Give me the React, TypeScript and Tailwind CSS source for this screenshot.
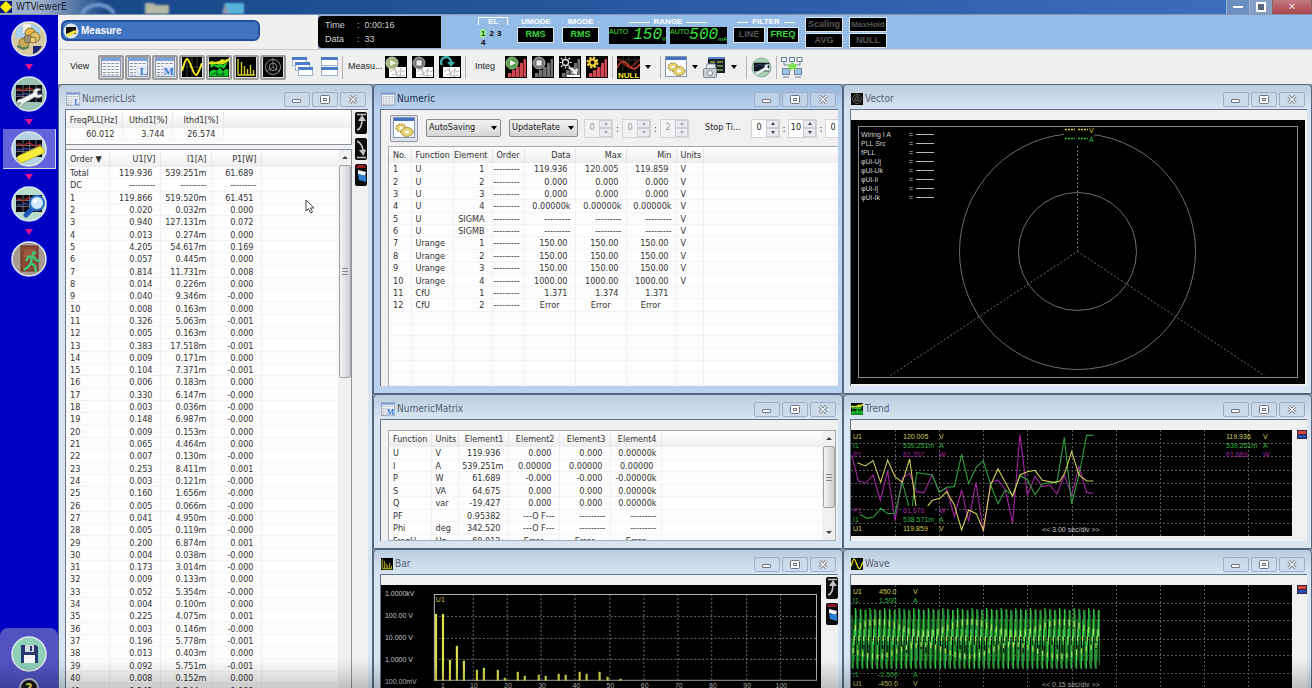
import { Fragment, type ReactNode } from "react";

type IconProps = { className?: string };

/* ---------- small window icons ---------- */

function ListIcon({ className = "size-5", letter }: IconProps & { letter?: string }) {
  return (
    <svg viewBox="0 0 20 20" className={className}>
      <rect x="0.5" y="0.5" width="19" height="19" fill="#f4f6fa" stroke="#8a96ac" />
      <rect x="1" y="1" width="18" height="3" fill="#7d9fd8" />
      <path
        d="M2 6.5h16M2 9.5h16M2 12.5h16M2 15.5h16M2 18h16"
        stroke="#8d939e"
        strokeWidth="1"
        strokeDasharray="3 1.2"
      />
      {letter && (
        <>
          <rect x="8" y="9" width="11" height="10" fill="#dfe8f8" />
          <text
            x="19"
            y="18"
            textAnchor="end"
            fontSize="11"
            fontWeight="bold"
            fontFamily="Liberation Serif, serif"
            fill="#3b77cf"
          >
            {letter}
          </text>
        </>
      )}
    </svg>
  );
}

function SineIcon({ className = "size-5" }: IconProps) {
  return (
    <svg viewBox="0 0 20 20" className={className}>
      <rect width="20" height="20" fill="#000" />
      <path d="M0 10h20M5 0v20M10 0v20M15 0v20" stroke="#4b4b3a" strokeWidth="0.8" />
      <path d="M0 14C2 8 3 2 5 2c3 0 6 16 9 16 2 0 4-7 6-12" fill="none" stroke="#f4ee22" strokeWidth="2" />
    </svg>
  );
}

function TrendIcon({ className = "size-5" }: IconProps) {
  return (
    <svg viewBox="0 0 20 20" className={className}>
      <rect width="20" height="20" fill="#000" />
      <path d="M0 5l3-1 3 1 4-1 3-2 3 1 4-2v3l-5 3-4 1-4-1-4 1-3-1z" fill="#d8e01c" />
      <path d="M1 8l4-1 3 1 3-1 3 1 5-3-2 4-2 3-3-2-3 1-4-2-3 2z" fill="#18c828" />
      <path d="M1 15l3-2 4 1 3-3 3 4 3-3 2 1v6H1z" fill="#18c828" stroke="#18c828" />
      <path d="M2 18l4-2 5 2 5-1M8 14v5M14 15v4" stroke="#053" fill="none" />
    </svg>
  );
}

function BarIcon({ className = "size-5" }: IconProps) {
  return (
    <svg viewBox="0 0 20 20" className={className}>
      <rect width="20" height="20" fill="#000" />
      <path d="M2 2v16h17M5.5 5v13M8.5 9v9M11.5 12v6M14.5 8v10M17.5 13v5" stroke="#d6cf2a" strokeWidth="1.4" fill="none" />
    </svg>
  );
}

function VectorIcon({ className = "size-5" }: IconProps) {
  return (
    <svg viewBox="0 0 20 20" className={className}>
      <rect width="20" height="20" fill="#0a0a0a" />
      <g fill="none" stroke="#8a8a8a">
        <circle cx="10" cy="10" r="7.5" />
        <circle cx="10" cy="10" r="3.8" />
        <path d="M10 1v9l-7 5M10 10l7 5" strokeWidth="0.8" />
      </g>
    </svg>
  );
}

function CascadeIcon() {
  return (
    <svg viewBox="0 0 21 20" className="h-5 w-[21px]">
      {[0, 1, 2].map((i) => (
        <g key={i} transform={`translate(${i * 3} ${i * 5})`}>
          <rect x="0.5" y="0.5" width="14" height="8" fill="#fff" stroke="#9fb2cf" />
          <rect width="15" height="3" fill="#4a7cc8" />
        </g>
      ))}
    </svg>
  );
}

function TileIcon() {
  return (
    <svg viewBox="0 0 17 20" className="h-5 w-[17px]">
      {[0, 10].map((y) => (
        <g key={y}>
          <rect x="0.5" y={y + 0.5} width="16" height="8" fill="#fff" stroke="#9fb2cf" />
          <rect y={y} width="17" height="3" fill="#4a7cc8" />
        </g>
      ))}
    </svg>
  );
}

/* ---------- toolbar icons ---------- */

function MeasureIcon({ kind }: { kind: "play" | "stop" | "reset" }) {
  return (
    <svg viewBox="0 0 22 22" className="size-[22px]">
      <rect width="22" height="22" fill="#000" />
      <rect x="4" y="11" width="17" height="10" fill="#fff" />
      <path
        d="M5 16l4-3 3 4 3-3 4 2 2-2M7 19l4-1 4 2 5-1M10 12l2 9M16 12l-1 9"
        fill="none"
        stroke="#b9aeb0"
        strokeWidth="0.9"
      />
      {kind === "play" && (
        <>
          <circle cx="7" cy="7" r="6" fill="#9fb57c" stroke="#d3d9bf" />
          <path d="M5 4l6 3-6 3z" fill="#eef5dd" />
        </>
      )}
      {kind === "stop" && (
        <>
          <circle cx="7" cy="7" r="6" fill="#777" stroke="#aaa" />
          <rect x="4.5" y="4.5" width="5" height="5" fill="#eee" />
        </>
      )}
      {kind === "reset" && (
        <>
          <path d="M3 9a5 5 0 1 1 9-2" fill="none" stroke="#3fb0b0" strokeWidth="2.4" />
          <path d="M8 6h8l-4 5z" fill="#3fb0b0" />
        </>
      )}
    </svg>
  );
}

function IntegIcon({ kind }: { kind: "play" | "stop" | "reset" | "set" }) {
  const red = kind === "play" || kind === "set";
  return (
    <svg viewBox="0 0 22 22" className="size-[22px]">
      <rect width="22" height="22" fill="#000" />
      <path
        d="M3 21v-4h3.500v4zM7 21v-7h3.500v7zM11 21V11h3.500v10zM15 21V7h3v14zM18.500 21V3H21v18z"
        fill={red ? "#cf4850" : "#727272"}
      />
      {kind === "play" && (
        <>
          <circle cx="7" cy="7" r="6" fill="#5c9a4e" stroke="#9fc48f" />
          <path d="M5 4l6 3-6 3z" fill="#e9f5dd" />
        </>
      )}
      {kind === "stop" && (
        <>
          <circle cx="7" cy="7" r="6" fill="#777" stroke="#aaa" />
          <rect x="4.5" y="4.5" width="5" height="5" fill="#eee" />
        </>
      )}
      {kind === "reset" && (
        <>
          <circle cx="6.5" cy="6.5" r="3" fill="none" stroke="#e8e8e8" strokeWidth="1.3" />
          <path
            d="M6.5 0.5v2M6.5 10.5v2M0.5 6.5h2M10.5 6.5h2M2 2l1.5 1.5M11 2L9.5 3.5M2 11l1.5-1.5M11 11L9.5 9.5"
            stroke="#e8e8e8"
            strokeWidth="1.2"
          />
          <path d="M8 12c4-1 7 0 8 2l3-2-1 7-6-2 2-1c-1-2-3-3-6-4z" fill="#eee" />
          <path d="M8 19h13v2H8z" fill="#fff" />
        </>
      )}
      {kind === "set" && (
        <>
          <circle cx="6.5" cy="6.5" r="4.5" fill="none" stroke="#f2cf3a" strokeWidth="3" strokeDasharray="2.2 1.3" />
          <circle cx="6.5" cy="6.5" r="3" fill="#111" stroke="#f2cf3a" strokeWidth="2" />
        </>
      )}
    </svg>
  );
}

function NullIcon() {
  return (
    <svg viewBox="0 0 23 23" className="size-[23px]">
      <rect width="23" height="23" fill="#000" />
      <path d="M0 4h23M6 0v15M12 0v15M18 0v15" stroke="#444" strokeWidth="0.7" />
      <path d="M0 12C4 4 7 4 11 9s8 5 12-1" fill="none" stroke="#e04a28" strokeWidth="1.5" />
      <path d="M0 3c5 0 7 8 12 8s7-6 11-7" fill="none" stroke="#9a2818" strokeWidth="1.2" />
      <text x="1" y="22" fontSize="8" fontWeight="bold" fontFamily="Liberation Sans, sans-serif" fill="#f3ea1e">
        NULL
      </text>
    </svg>
  );
}

function GearsIcon() {
  return (
    <svg viewBox="0 0 22 22" className="size-[22px]">
      <rect x="0.5" y="0.5" width="21" height="20" fill="#fbfcff" stroke="#8795b2" />
      <rect x="1" y="1" width="20" height="3" fill="#4470c6" />
      <g fill="#e6d272" stroke="#8d7a28">
        <ellipse cx="8" cy="11" rx="5" ry="4" strokeDasharray="2 1" />
        <ellipse cx="14" cy="15" rx="6" ry="4.5" strokeDasharray="2 1" />
      </g>
      <ellipse cx="8" cy="11" rx="1.8" ry="1.3" fill="#fff" />
      <ellipse cx="14" cy="15" rx="2.2" ry="1.6" fill="#fff" />
    </svg>
  );
}

function PrintIcon() {
  return (
    <svg viewBox="0 0 23 23" className="size-[23px]">
      <rect x="5" y="1" width="17" height="16" fill="#16202a" />
      <rect x="5" y="1" width="17" height="2" fill="#5b83c8" />
      <path d="M7 6h5M14 6h6M14 10h6M14 14h6" stroke="#93a04c" strokeWidth="1.5" />
      <path d="M4 8h8l1 5H3z" fill="#e5eaf0" stroke="#8c96a2" />
      <rect x="0.5" y="12.5" width="13" height="9" rx="1" fill="#c9ced4" stroke="#7e8791" />
      <circle cx="7" cy="17" r="2.5" fill="#f5f5f5" stroke="#888" />
    </svg>
  );
}

function SetupIcon() {
  return (
    <svg viewBox="0 0 22 22" className="size-[21px]">
      <circle cx="11" cy="11" r="10" fill="#a9d0b8" stroke="#8ab09a" />
      <rect x="3" y="6" width="16" height="9" fill="#10131c" />
      <path d="M4 10l4-2 4 1 5-2" stroke="#3b5a8f" fill="none" />
      <path
        d="M4 17l10-6c0-3 3-4 5-3l-2 2 1 2 3-1c-1 3-3 4-6 3L6 19z"
        fill="#f3f6f6"
        stroke="#8c9a96"
        strokeWidth="0.5"
      />
    </svg>
  );
}

function NetworkIcon() {
  return (
    <svg viewBox="0 0 22 22" className="size-[22px]">
      <g fill="#e9f0fa" stroke="#6f8199">
        <rect x="0.5" y="1.5" width="5" height="4" />
        <rect x="8.5" y="1.5" width="5" height="4" />
        <rect x="16" y="1.5" width="5" height="4" />
        <rect x="1.5" y="12.5" width="7" height="6" fill="#9dc3e6" />
        <rect x="13.5" y="12.5" width="7" height="6" fill="#9dc3e6" />
        <path d="M2 21h6M14 21h6M3 6v3h16V6M11 6v6" fill="none" />
      </g>
      <path d="M11 5l2 3 3 0-1 3 1 3-4-1-3 2-1-3-2-3 4-1z" fill="#84e05a" />
    </svg>
  );
}

/* ---------- sidebar icons ---------- */

function RoundIcon({ kind }: { kind: "connect" | "setup" | "measure" | "search" | "exit" | "save" }) {
  const ring: Record<string, string> = {
    connect: "#d9c9a0",
    setup: "#9cc4b4",
    measure: "#b4d2e2",
    search: "#b8dccb",
    exit: "#a89a90",
    save: "#8fd0b8",
  };
  const scope = kind === "setup" || kind === "measure" || kind === "search";
  return (
    <svg viewBox="0 0 36 36" className="size-9">
      <circle cx="18" cy="18" r="17" fill={ring[kind]} stroke="#dde6ee" strokeWidth="1.5" />
      {scope && (
        <>
          <rect x="5" y="9" width="26" height="17" fill="#0c0a12" />
          <path d="M5 14.5h26M5 20.5h26M12 9v17M18.5 9v17M25 9v17" stroke="#9fa3ad" strokeWidth="0.6" />
          <path d="M6 14c3-4 5 3 8 0s5-2 8 0 5 1 8-1" stroke="#b4302c" fill="none" strokeWidth="1.3" />
          <path d="M6 18c4 3 6-2 10 0s8-3 14 0" stroke="#3b4fb0" fill="none" strokeWidth="1.3" />
        </>
      )}
      {kind === "connect" && (
        <>
          <path d="M5 9c5-7 18-8 24-2v10H4z" fill="#a8d2ee" />
          <path d="M12 3h8v9h-8z" fill="#eef0e0" />
          <path d="M22 25h9c-2 4-5 7-9 8z" fill="#1d2570" />
          <g stroke="#7d6428" strokeWidth="0.9">
            <circle cx="19" cy="12" r="5" fill="#e5b64c" />
            <circle cx="24" cy="16" r="5" fill="#d8c070" />
            <circle cx="13" cy="22" r="5" fill="#c7a95a" />
            <circle cx="17" cy="18" r="4" fill="#9a9080" />
            <circle cx="22" cy="19" r="3" fill="#e9cf7d" />
          </g>
          <path d="M6 25l6 3 6-2" fill="none" stroke="#4f8060" strokeWidth="2" />
        </>
      )}
      {kind === "setup" && (
        <path
          d="M6 28c-1-3 1-5 4-5l12-6c0-4 4-6 8-4l-4 3 1 3 5-1c-1 4-5 5-8 3l-12 7c-1 3-4 4-6 2l4-2-1-2z"
          fill="#f3f4f4"
          stroke="#6d7a7a"
          strokeWidth="0.7"
        />
      )}
      {kind === "measure" && (
        <path d="M7 25l22-10 4 3v4L10 32l-4-3z" fill="#f5ec3c" stroke="#b7a92b" strokeWidth="0.8" />
      )}
      {kind === "search" && (
        <>
          <path d="M15 29l7-7" stroke="#1f58b8" strokeWidth="5" strokeLinecap="round" />
          <circle cx="26" cy="17" r="7" fill="#cfeafa" stroke="#2f72cc" strokeWidth="2" />
          <circle cx="24" cy="15" r="2" fill="#fff" />
        </>
      )}
      {kind === "exit" && (
        <>
          <rect x="10" y="5" width="17" height="25" fill="#8c4a34" stroke="#5e2f20" />
          <path d="M13 8h11v8H13z" fill="#9d5a42" />
          <circle cx="23" cy="12" r="2" fill="#3fc57c" />
          <path
            d="M22 15l-5 1-2 4M22 15l3 4 4 1M21 16l-1 6 4 3 1 6M20 22l-3 4-4 3"
            fill="none"
            stroke="#3fc57c"
            strokeWidth="2.4"
          />
        </>
      )}
      {kind === "save" && (
        <>
          <path d="M10 9h15l2 2v16H10z" fill="#26396e" />
          <rect x="14" y="9" width="9" height="7" fill="#d3d8de" />
          <rect x="19" y="10" width="2" height="5" fill="#26396e" />
          <rect x="13" y="19" width="11" height="8" fill="#f4f4f4" />
        </>
      )}
    </svg>
  );
}

function UpIcon({ down = false }: { down?: boolean }) {
  return (
    <svg viewBox="0 0 12 22" className="h-[22px] w-3">
      <rect width="12" height="22" rx="2" fill="#0b0b0b" />
      {down ? (
        <>
          <path d="M2 3c4 2 6 6 6 11M2 19.5h9" fill="none" stroke="#c4c4c4" strokeWidth="1.6" />
          <path d="M4 12l4.5 6 2.5-6.5z" fill="#c4c4c4" />
        </>
      ) : (
        <>
          <path d="M2 18c4-1 5-5 5-11M2 2.5h9" fill="none" stroke="#c4c4c4" strokeWidth="1.6" />
          <path d="M3 9l4-6 4 6z" fill="#c4c4c4" />
        </>
      )}
    </svg>
  );
}

function ColorIcon() {
  return (
    <svg viewBox="0 0 12 22" className="h-[22px] w-3">
      <rect width="12" height="22" rx="2" fill="#0b0b0b" />
      <path d="M2 1h8l1 3H1z" fill="#8e1c22" />
      <path d="M3 6l8 2-1 4-7-2z" fill="#f3f6f8" />
      <path d="M3 10l8 2v6l-7-2z" fill="#2b7fd0" />
    </svg>
  );
}

function FlagIcon() {
  return (
    <svg viewBox="0 0 10 9" className="h-[9px] w-2.5">
      <rect width="10" height="9" fill="#2b2740" />
      <rect x="1" y="1" width="8" height="3" fill="#e2423c" />
      <rect x="1" y="5" width="8" height="3" fill="#2a4bb4" />
    </svg>
  );
}

/* ---------- windows ---------- */

function WindowButtons() {
  const box =
    "flex h-[15px] w-[26px] items-center justify-center rounded-xs border border-[#9fadc6] bg-[#cbd9ea]/60";
  return (
    <div className="ml-auto flex gap-0.5">
      <button aria-label="Minimize" className={box}>
        <svg viewBox="0 0 10 9" className="h-[9px] w-2.5">
          <rect x="0.5" y="4.5" width="8" height="3" rx="0.5" fill="#fff" stroke="#6c7485" />
        </svg>
      </button>
      <button aria-label="Maximize" className={box}>
        <svg viewBox="0 0 10 9" className="h-[9px] w-2.5">
          <rect x="0.5" y="0.5" width="9" height="8" rx="1" fill="#fff" stroke="#6c7485" />
          <rect x="3.5" y="3.5" width="3" height="2" fill="#fff" stroke="#6c7485" />
        </svg>
      </button>
      <button aria-label="Close" className={box}>
        <svg viewBox="0 0 10 9" className="h-[9px] w-2.5">
          <path d="M1.5 1l7 7M8.5 1l-7 7" stroke="#6c7485" strokeWidth="3" />
          <path d="M1.5 1l7 7M8.5 1l-7 7" stroke="#fff" strokeWidth="1.2" />
        </svg>
      </button>
    </div>
  );
}

type WindowProps = { title: string; icon: ReactNode; active?: boolean; children: ReactNode };

function ChildWindow({ title, icon, active = false, children }: WindowProps) {
  return (
    <section
      className={`flex shrink-0 flex-col rounded-t border border-[#55677e] pr-1 pb-[7px] pl-1.5 ${
        active
          ? "bg-linear-to-b from-[#98b7db] to-[#b9d3ee] to-[24px]"
          : "bg-linear-to-b from-[#bccde0] to-[#d8e4f1] to-[24px]"
      }`}
    >
      <header className="flex h-6 shrink-0 items-center gap-0.5 pt-1 pr-0.5 pl-px">
        {icon}
        <h2 className={`text-[10px] leading-4 ${active ? "text-[#1d2f48]" : "text-[#56606f]"}`}>{title}</h2>
        <WindowButtons />
      </header>
      <div className="relative flex flex-col border-t border-l border-[#66768a] bg-[#f0f0f0]">{children}</div>
    </section>
  );
}

/* ---------- data tables ---------- */

type Column = { label: string; width?: string; left?: boolean };

function cellPad(text: string) {
  if (text === "Error") return "pr-[15px]";
  return /[mk-]$/.test(text) ? "pr-1" : "pr-[7px]";
}

function DataTable({ columns, rows, className = "" }: { columns: Column[]; rows: string[][]; className?: string }) {
  return (
    <table className={`w-full table-fixed border-collapse bg-[#fdfdfd] text-[9px] leading-3 text-[#333] ${className}`}>
      <colgroup>
        {columns.map((c, i) => (
          <col key={i} className={c.width} />
        ))}
      </colgroup>
      <thead className="bg-linear-to-b from-white to-[#ededee]">
        <tr className="h-4">
          {columns.map((c, i) => (
            <th
              key={i}
              scope="col"
              className={`border-r border-[#e6e6e8] p-0 font-normal whitespace-nowrap last:border-r-0 ${
                c.left ? "pl-1 text-left" : "pr-1 text-right"
              }`}
            >
              {c.label}
            </th>
          ))}
        </tr>
      </thead>
      <tbody>
        {rows.map((row, r) => (
          <tr key={r}>
            {columns.map((c, i) => {
              const text = row[i] ?? "";
              return (
                <td
                  key={i}
                  className={`border-r border-[#f1f1f2] p-0 whitespace-nowrap shadow-[inset_0_-1px_#f3f3f4] last:border-r-0 ${
                    c.left ? "pl-1" : `text-right ${cellPad(text)}`
                  }`}
                >
                  {text}
                  {text === "" && i === 0 && "\u00a0"}
                </td>
              );
            })}
          </tr>
        ))}
      </tbody>
    </table>
  );
}

function ScrollBar({ thumb }: { thumb: string }) {
  return (
    <div className="flex w-[13px] shrink-0 flex-col items-center bg-[#f0f0f0] pt-1.5">
      <span className="border-x-[3px] border-b-[3px] border-x-transparent border-b-[#444]" />
      <div
        className={`mt-1.5 flex w-3 items-center justify-center rounded-xs border border-[#a3a3a3] bg-linear-to-r from-[#f4f4f4] to-[#cfcfd2] ${thumb}`}
      >
        <span className="h-[7px] w-1.5 border-y border-[#888] bg-linear-to-b from-transparent from-40% via-[#888] to-transparent to-60%" />
      </div>
      <span className="mt-auto mb-1.5 border-x-[3px] border-t-[3px] border-x-transparent border-t-[#444]" />
    </div>
  );
}

const DASH = "---------";

const listColumns: Column[] = [
  { label: "Order ▼", width: "w-[43px]", left: true },
  { label: "U1[V]", width: "w-[51px]" },
  { label: "I1[A]", width: "w-[51px]" },
  { label: "P1[W]", width: "w-[50px]" },
  { label: "" },
];

const listRows: string[][] = [
  ["Total", "119.936", "539.251m", "61.689"],
  ["DC", DASH, DASH, DASH],
  ["1", "119.866", "519.520m", "61.451"],
  ["2", "0.020", "0.032m", "0.000"],
  ["3", "0.940", "127.131m", "0.072"],
  ["4", "0.013", "0.274m", "0.000"],
  ["5", "4.205", "54.617m", "0.169"],
  ["6", "0.057", "0.445m", "0.000"],
  ["7", "0.814", "11.731m", "0.008"],
  ["8", "0.014", "0.226m", "0.000"],
  ["9", "0.040", "9.346m", "-0.000"],
  ["10", "0.008", "0.163m", "0.000"],
  ["11", "0.326", "5.063m", "-0.001"],
  ["12", "0.005", "0.163m", "0.000"],
  ["13", "0.383", "17.518m", "-0.001"],
  ["14", "0.009", "0.171m", "0.000"],
  ["15", "0.104", "7.371m", "-0.001"],
  ["16", "0.006", "0.183m", "0.000"],
  ["17", "0.330", "6.147m", "-0.000"],
  ["18", "0.003", "0.036m", "-0.000"],
  ["19", "0.148", "6.987m", "-0.000"],
  ["20", "0.009", "0.153m", "0.000"],
  ["21", "0.065", "4.464m", "0.000"],
  ["22", "0.007", "0.130m", "-0.000"],
  ["23", "0.253", "8.411m", "0.001"],
  ["24", "0.003", "0.121m", "-0.000"],
  ["25", "0.160", "1.656m", "-0.000"],
  ["26", "0.005", "0.066m", "-0.000"],
  ["27", "0.041", "4.950m", "-0.000"],
  ["28", "0.005", "0.119m", "-0.000"],
  ["29", "0.200", "6.874m", "0.001"],
  ["30", "0.004", "0.038m", "-0.000"],
  ["31", "0.173", "3.014m", "-0.000"],
  ["32", "0.009", "0.133m", "0.000"],
  ["33", "0.052", "5.354m", "-0.000"],
  ["34", "0.004", "0.100m", "0.000"],
  ["35", "0.225", "4.075m", "0.001"],
  ["36", "0.003", "0.146m", "-0.000"],
  ["37", "0.196", "5.778m", "-0.001"],
  ["38", "0.013", "0.403m", "0.000"],
  ["39", "0.092", "5.751m", "-0.001"],
  ["40", "0.008", "0.152m", "0.000"],
  ["41", "0.242", "3.244m", "0.000"],
];

const numericColumns: Column[] = [
  { label: "No.", width: "w-[22px]", left: true },
  { label: "Function", width: "w-[42px]", left: true },
  { label: "Element", width: "w-[39px]" },
  { label: "Order", width: "w-[32px]" },
  { label: "Data", width: "w-[51px]" },
  { label: "Max", width: "w-[51px]" },
  { label: "Min", width: "w-[50px]" },
  { label: "Units", width: "w-[27px]", left: true },
  { label: "" },
];

const numericRows: string[][] = [
  ["1", "U", "1", DASH, "119.936", "120.005", "119.859", "V"],
  ["2", "U", "2", DASH, "0.000", "0.000", "0.000", "V"],
  ["3", "U", "3", DASH, "0.000", "0.000", "0.000", "V"],
  ["4", "U", "4", DASH, "0.00000k", "0.00000k", "0.00000k", "V"],
  ["5", "U", "SIGMA", DASH, DASH, DASH, DASH, "V"],
  ["6", "U", "SIGMB", DASH, DASH, DASH, DASH, "V"],
  ["7", "Urange", "1", DASH, "150.00", "150.00", "150.00", "V"],
  ["8", "Urange", "2", DASH, "150.00", "150.00", "150.00", "V"],
  ["9", "Urange", "3", DASH, "150.00", "150.00", "150.00", "V"],
  ["10", "Urange", "4", DASH, "1000.00", "1000.00", "1000.00", "V"],
  ["11", "CfU", "1", DASH, "1.371", "1.374", "1.371", ""],
  ["12", "CfU", "2", DASH, "Error", "Error", "Error", ""],
  [],
  [],
  [],
  [],
  [],
  [],
];

const matrixColumns: Column[] = [
  { label: "Function", width: "w-[42px]", left: true },
  { label: "Units", width: "w-[27px]", left: true },
  { label: "Element1", width: "w-[50px]" },
  { label: "Element2", width: "w-[51px]" },
  { label: "Element3", width: "w-[51px]" },
  { label: "Element4", width: "w-[51px]" },
  { label: "" },
];

const matrixRows: string[][] = [
  ["U", "V", "119.936", "0.000", "0.000", "0.00000k"],
  ["I", "A", "539.251m", "0.00000", "0.00000", "0.00000"],
  ["P", "W", "61.689", "-0.000", "-0.000", "-0.00000k"],
  ["S", "VA", "64.675", "0.000", "0.000", "0.00000k"],
  ["Q", "var", "-19.427", "0.000", "0.000", "0.00000k"],
  ["PF", "", "0.95382", "---O F---", DASH, DASH],
  ["Phi", "deg", "342.520", "---O F---", DASH, DASH],
  ["FreqU", "Hz", "60.012", "Error", "Error", "Error"],
];

const thdColumns: Column[] = [
  { label: "FreqPLL[Hz]", width: "w-[56px]" },
  { label: "Uthd1[%]", width: "w-[50px]" },
  { label: "Ithd1[%]", width: "w-[51px]" },
  { label: "" },
];

function NumericListWindow() {
  return (
    <ChildWindow title="NumericList" icon={<ListIcon className="size-3.5" letter="L" />}>
      <div className="flex">
        <div className="flex min-w-0 flex-1 flex-col gap-1">
          <div className="border-r border-b border-[#8a929c] bg-[#fdfdfd] pt-0.5 pb-1">
            <DataTable columns={thdColumns} rows={[["60.012", "3.744", "26.574"]]} />
          </div>
          <div className="flex border-t border-r border-[#8a929c] bg-[#fdfdfd]">
            <div className="min-w-0 flex-1 pt-px">
              <DataTable columns={listColumns} rows={listRows} className="h-[546px]" />
            </div>
            <ScrollBar thumb="h-[213px]" />
          </div>
        </div>
        <div className="flex flex-col gap-1 pt-0.5 pr-px pl-[3px]">
          <button aria-label="Page up">
            <UpIcon />
          </button>
          <button aria-label="Page down">
            <UpIcon down />
          </button>
          <button aria-label="Colors">
            <ColorIcon />
          </button>
        </div>
      </div>
      <svg viewBox="0 0 9 15" className="pointer-events-none absolute top-[89px] left-[239px] h-[15px] w-[9px]">
        <path d="M1 1v11l2.5-2.5L5.5 14l2-1-2-4H9z" fill="#fff" stroke="#333" strokeWidth="0.9" />
      </svg>
    </ChildWindow>
  );
}

function Combo({ label, width }: { label: string; width: string }) {
  return (
    <div className={`relative shrink-0 ${width}`}>
      <select
        aria-label={label}
        className="block h-[18px] w-full appearance-none rounded-xs border border-[#8b8b8b] bg-linear-to-b from-[#f3f3f3] to-[#d6d6d6] pl-0.5 text-[9px] text-[#222]"
      >
        <option>{label}</option>
      </select>
      <span className="pointer-events-none absolute top-[7px] right-1 border-x-[3px] border-t-4 border-x-transparent border-t-black" />
    </div>
  );
}

function Spinner({ value, label, disabled = false }: { value: string; label: string; disabled?: boolean }) {
  const arrow = disabled ? "border-b-[#aaa]" : "border-b-[#444]";
  const arrowDown = disabled ? "border-t-[#aaa]" : "border-t-[#444]";
  const step = "flex flex-1 items-center justify-center border border-[#cdcdd4] bg-[#ebebef]";
  return (
    <div className={`flex h-[19px] w-[29px] shrink-0 border border-[#d4d4d4] ${disabled ? "bg-[#f2f2f2]" : "bg-white"}`}>
      <input
        aria-label={label}
        defaultValue={value}
        disabled={disabled}
        className={`w-3.5 text-center text-[9px] ${disabled ? "text-[#999]" : "text-[#222]"}`}
      />
      <div className="flex flex-1 flex-col">
        <button aria-label={`${label} up`} disabled={disabled} className={step}>
          <span className={`border-x-2 border-b-[3px] border-x-transparent ${arrow}`} />
        </button>
        <button aria-label={`${label} down`} disabled={disabled} className={step}>
          <span className={`border-x-2 border-t-[3px] border-x-transparent ${arrowDown}`} />
        </button>
      </div>
    </div>
  );
}

function TimeFields({ values, name, disabled, gap }: { values: string[]; name: string; disabled?: boolean; gap: string }) {
  return (
    <div className="flex items-center">
      {values.map((v, i) => (
        <Fragment key={i}>
          {i > 0 && <span className={`text-center text-[10px] text-[#333] ${gap}`}>:</span>}
          <Spinner value={v} label={`${name} ${i + 1}`} disabled={disabled} />
        </Fragment>
      ))}
    </div>
  );
}

function NumericWindow() {
  return (
    <ChildWindow title="Numeric" icon={<ListIcon className="size-3.5" />} active>
      <div className="flex h-9 items-center overflow-hidden pl-[9px]">
        <button
          aria-label="Settings"
          className="flex h-[27px] w-7 shrink-0 items-center justify-center rounded-xs border border-[#8e98a6] bg-[#dde4ec]"
        >
          <GearsIcon />
        </button>
        <div className="ml-2 flex gap-2">
          <Combo label="AutoSaving" width="w-[75px]" />
          <Combo label="UpdateRate" width="w-[69px]" />
        </div>
        <div className="ml-1.5 flex shrink-0">
          <TimeFields name="Interval" values={["0", "0", "2"]} disabled gap="w-[9px]" />
        </div>
        <span className="ml-4 w-[46px] shrink-0 text-[9px] text-[#222]">Stop Ti...</span>
        <TimeFields name="Stop time" values={["0", "10", "0"]} gap="w-2" />
      </div>
      <div className="ml-[7px] border-t border-l border-[#a5abb3]">
        <DataTable columns={numericColumns} rows={numericRows} className="h-[239px]" />
      </div>
    </ChildWindow>
  );
}

function MatrixWindow() {
  return (
    <ChildWindow title="NumericMatrix" icon={<ListIcon className="size-3.5" letter="M" />}>
      <div className="mt-2.5 mr-0.5 ml-[7px] flex h-[111px] overflow-hidden border border-[#a5abb3] bg-white">
        <div className="min-w-0 flex-1">
          <DataTable columns={matrixColumns} rows={matrixRows} className="h-[116px]" />
        </div>
        <ScrollBar thumb="h-[62px]" />
      </div>
    </ChildWindow>
  );
}

/* ---------- charts ---------- */

const plotFont = "font-['Liberation_Sans',Arial,sans-serif] text-[7px]";

const bars: [number, number][] = [
  [55, 29], [62, 29], [69, 75], [76, 61], [83, 76], [96, 85], [103, 83], [117, 85], [124, 93], [137, 87],
  [144, 91], [158, 90], [165, 91], [178, 89], [185, 90], [199, 87], [206, 89], [219, 87], [227, 92], [240, 94],
];

const barTicks = [10, 20, 30, 40, 50, 60, 70, 80, 90, 100];

function BarChart() {
  return (
    <svg viewBox="0 0 441 116" className={`w-full ${plotFont}`}>
      <rect width="441" height="116" fill="#000" />
      <g stroke="#707070" strokeDasharray="2 2">
        {[31, 53, 74].map((y) => (
          <path key={y} d={`M54 ${y + 0.5}H437`} />
        ))}
        {barTicks.map((t, i) => (
          <path key={t} d={`M${Math.round(91.7 + i * 34.25) + 0.5} 9V96`} />
        ))}
      </g>
      <rect x="53.5" y="9.5" width="383" height="86" fill="none" stroke="#b5b5b5" />
      {bars.map(([x, y], i) => (
        <rect key={i} x={x - 1} y={y} width="2.2" height={96 - y} fill="#dbe04c" />
      ))}
      <g fill="#c8c8c8">
        {["1.0000kV", "100.00 V", "10.000 V", "1.0000 V", "100.00mV"].map((t, i) => (
          <text key={t} x="4" y={11 + i * 22}>
            {t}
          </text>
        ))}
        <text x="62" y="103" textAnchor="middle">
          1
        </text>
        {barTicks.map((t, i) => (
          <text key={t} x={93 + i * 34.25} y="103" textAnchor="middle">
            {t}
          </text>
        ))}
      </g>
      <text x="55" y="17" fill="#c9c94a">
        U1
      </text>
    </svg>
  );
}

function VectorChart() {
  const labels = ["Wiring I A", "PLL Src", "fPLL", "φUi-Uj", "φUi-Uk", "φUi-Ii", "φUi-Ij", "φUi-Ik"];
  return (
    <svg viewBox="0 0 454 264" className={`w-full ${plotFont}`}>
      <rect width="454" height="264" fill="#000" />
      <rect x="7.5" y="6.5" width="439" height="251" fill="none" stroke="#8c8c8c" />
      <g fill="none" stroke="#6e6e6e">
        <circle cx="226.5" cy="131.5" r="118" />
        <circle cx="226.5" cy="131.5" r="59" />
        <path d="M226.5 22V131.5L39.5 255.5M226.5 131.5L413.5 255.5" strokeDasharray="2 2" />
      </g>
      <rect x="213" y="8" width="30" height="16" fill="#000" />
      <path d="M214 9.5h10M227 9.5h10" stroke="#d8cf32" strokeWidth="1.4" strokeDasharray="2 1" />
      <path d="M214 18.5h10M227 18.5h10" stroke="#2fb83a" strokeWidth="1.4" strokeDasharray="2 1" />
      <text x="238" y="13" fill="#d8cf32">
        V
      </text>
      <text x="238" y="22" fill="#2fb83a">
        A
      </text>
      {labels.map((t, i) => (
        <g key={t} fill="#d0d0d0">
          <text x="10" y={17 + i * 9}>
            {t}
          </text>
          <text x="58" y={17 + i * 9}>
            =
          </text>
          <path d={`M65 ${14.5 + i * 9}H83`} stroke="#b5b5b5" />
        </g>
      ))}
    </svg>
  );
}

const gridX = Array.from({ length: 9 }, (_, i) => Math.round((i + 1) * 44.1) + 0.5);

type Reading = { name: string; value: string; unit: string; color: string };
type ReadingsProps = { items: Reading[]; y: number; nameX?: number; valueX: number; unitX: number };

function Readings({ items, y, nameX, valueX, unitX }: ReadingsProps) {
  return (
    <>
      {items.map((r, i) => (
        <g key={i} fill={r.color}>
          {nameX !== undefined && (
            <text x={nameX} y={y + i * 9}>
              {r.name}
            </text>
          )}
          <text x={valueX} y={y + i * 9}>
            {r.value}
          </text>
          <text x={unitX} y={y + i * 9}>
            {r.unit}
          </text>
        </g>
      ))}
    </>
  );
}

const YELLOW = "#d2cf58";
const GREEN = "#35b544";
const PURPLE = "#a422a4";

function TrendChart() {
  return (
    <svg viewBox="0 0 441 106" className={`w-full ${plotFont}`}>
      <rect width="441" height="106" fill="#000" />
      <g stroke="#5a5a5a" strokeDasharray="2 2">
        {gridX.map((x) => (
          <path key={x} d={`M${x} 0V106`} />
        ))}
        {[13, 26, 40, 53, 66, 79, 93].map((y) => (
          <path key={y} d={`M0 ${y + 0.5}H441`} />
        ))}
      </g>
      <g transform="translate(-11 -35) scale(0.3333)" fill="none" strokeWidth="3.3">
        <path
          stroke={PURPLE}
          d="M35 180L55 258 78 264 99 240 121 316 143 228 165 378 187 250 209 235 230 290 252 293 276 240 298 290 320 280 343 365 365 285 386 380 408 262 430 412 452 262 474 255 496 285 518 384 540 118 562 300 585 245 607 275 630 270 651 297 673 240 695 300 717 215 740 293 760 295"
        />
        <path
          stroke="#2f9f3c"
          d="M60 358L80 370 100 367 122 340 143 356 165 355 187 262 207 335M217 335L230 233 277 240 298 292 320 277 343 275 365 178 386 266 409 216 430 197 452 270 474 326 496 285 518 300 540 242 562 254 585 300 607 266 651 262 673 128 695 326 717 240 740 121 760 121"
        />
        <path
          stroke={YELLOW}
          d="M52 203L76 213 99 197 122 262 143 195 165 245 187 262 209 192 228 335M262 335L277 316 300 310 320 290 343 330 365 405 386 345 409 356 430 405 452 270 474 222 496 262 518 304 540 240 562 230 585 226 607 256 640 262 660 258 674 235 695 170 717 240 740 258 760 258"
        />
      </g>
      <rect x="51" y="76" width="32" height="26" fill="#000" />
      <Readings
        y={9}
        nameX={2}
        valueX={52}
        unitX={88}
        items={[
          { name: "U1", value: "120.005", unit: "V", color: YELLOW },
          { name: "I1", value: "539.251m", unit: "A", color: GREEN },
          { name: "P1", value: "61.707", unit: "W", color: PURPLE },
        ]}
      />
      <Readings
        y={83}
        nameX={2}
        valueX={52}
        unitX={88}
        items={[
          { name: "P1", value: "61.676", unit: "W", color: PURPLE },
          { name: "I1", value: "538.571m", unit: "A", color: GREEN },
          { name: "U1", value: "119.859", unit: "V", color: YELLOW },
        ]}
      />
      <Readings
        y={9}
        valueX={375}
        unitX={412}
        items={[
          { name: "U1", value: "119.936", unit: "V", color: YELLOW },
          { name: "I1", value: "539.251m", unit: "A", color: GREEN },
          { name: "P1", value: "61.689", unit: "W", color: PURPLE },
        ]}
      />
      <text x="191" y="102" fill="#c4c4c4">
        &lt;&lt; 3.00 sec/div &gt;&gt;
      </text>
    </svg>
  );
}

const cycles = Array.from({ length: 51 }, (_, i) => i);
const currentPath = cycles
  .map((i) => {
    const x = 1 + i * 4.86;
    return `M${x + 1} ${56 + (i % 4) * 4}V84M${x + 3.4} ${23 + (i % 3)}V52M${x + 2.2} 44V60`;
  })
  .join("");
const edgePath = cycles
  .map((i) => {
    const x = 1 + i * 4.86;
    return `M${x} 30V83M${x + 4.4} 25V80M${x + 2.2} 34V76`;
  })
  .join("");
const voltagePath = cycles
  .map((i) => {
    const x = 1 + i * 4.86;
    const a = 14 + 6 * Math.sin(i / 3);
    return `M${x + 1} ${54 + a}v-5M${x + 3.4} ${54 - a}v6M${x + 2} 51v5`;
  })
  .join("");

function WaveChart() {
  return (
    <svg viewBox="0 0 441 116" className={`w-full ${plotFont}`}>
      <rect width="441" height="116" fill="#000" />
      <g stroke="#5a5a5a" strokeDasharray="2 2">
        {gridX.map((x) => (
          <path key={x} d={`M${x} 0V116`} />
        ))}
        {[18, 35, 54, 70, 88].map((y) => (
          <path key={y} d={`M0 ${y + 0.5}H441`} />
        ))}
      </g>
      <path d={edgePath} fill="none" stroke="#1d7a28" strokeWidth="1.2" />
      <path d={currentPath} fill="none" stroke="#3cc44a" strokeWidth="1.2" />
      <path d={voltagePath} fill="none" stroke="#a8e860" strokeWidth="1.2" />
      <Readings
        y={9}
        nameX={2}
        valueX={28}
        unitX={62}
        items={[
          { name: "U1", value: "450.0", unit: "V", color: YELLOW },
          { name: "I1", value: "1.500", unit: "A", color: GREEN },
        ]}
      />
      <Readings
        y={92}
        nameX={2}
        valueX={27}
        unitX={62}
        items={[
          { name: "I1", value: "-1.500", unit: "A", color: GREEN },
          { name: "U1", value: "-450.0", unit: "V", color: YELLOW },
        ]}
      />
      <text x="191" y="102" fill="#c4c4c4">
        &lt;&lt; 0.15 sec/div &gt;&gt;
      </text>
    </svg>
  );
}

/* ---------- frame ---------- */

function TitleBar() {
  return (
    <div className="flex h-[15px] shrink-0 items-center overflow-hidden border-b border-[#8396b0] bg-linear-to-r from-[#9fb2cc] from-3% via-[#194788] via-8% to-[#3f6fc0]">
      <svg viewBox="0 0 12 12" className="size-3">
        <rect width="12" height="12" fill="#10207a" />
        <path d="M6 0l6 6-6 6-6-6z" fill="#fff200" />
      </svg>
      <h1 className="ml-1 text-[10px] leading-3 text-[#1a2230]">WTViewerE</h1>
      <svg viewBox="0 0 180 14" className="ml-3 h-3.5 w-[180px] shrink-0 blur-[1px]">
        <path d="M3 14a17 14 0 0 1 32 0" fill="none" stroke="#6f98cc" strokeWidth="4" />
        <path d="M66 3h8l3 2h13v9H66z" fill="#b3b9a4" />
        <path d="M146 3h19v11h-19z" fill="#58b4dc" />
        <path d="M146 3l-3 11h8z" fill="#90a0b4" />
      </svg>
      <div className="ml-auto flex h-full">
        <button
          aria-label="Minimize window"
          className="flex w-6 items-end justify-center border-x border-[#9ab0d0] bg-[#6b8fc0] pb-1.5"
        >
          <span className="h-0.5 w-2.5 bg-white" />
        </button>
        <button aria-label="Restore window" className="flex w-[22px] items-center justify-center bg-[#86a0c4]">
          <span className="size-2.5 border-2 border-white bg-[#55657c]" />
        </button>
        <button
          aria-label="Close window"
          className="w-10 border-x border-[#8d5b66] bg-linear-to-b from-[#c07a80] to-[#a8434a] text-[10px] leading-3 text-white/80"
        >
          ✕
        </button>
      </div>
    </div>
  );
}

function SideArrow() {
  return (
    <div className="flex h-[19px] items-center">
      <span className="border-x-4 border-t-[6px] border-x-transparent border-t-[#e0128e]" />
    </div>
  );
}

function Sidebar() {
  return (
    <nav className="flex w-[58px] shrink-0 flex-col bg-[#0000c4]">
      <div className="flex flex-col items-center">
        <button aria-label="Connection" className="mt-1.5">
          <RoundIcon kind="connect" />
        </button>
        <SideArrow />
        <button aria-label="Setting">
          <RoundIcon kind="setup" />
        </button>
        <SideArrow />
        <button
          aria-label="Measure"
          className="-my-0.5 flex h-10 w-[53px] items-center justify-center border-r border-b border-[#d3d3f6] bg-[#6363dc]"
        >
          <RoundIcon kind="measure" />
        </button>
        <SideArrow />
        <button aria-label="Analyze">
          <RoundIcon kind="search" />
        </button>
        <SideArrow />
        <button aria-label="Exit">
          <RoundIcon kind="exit" />
        </button>
      </div>
      <div className="mt-auto flex h-[60px] flex-col items-center gap-1.5 overflow-hidden rounded-t-lg bg-[#5252c2] pt-2">
        <button aria-label="Save" className="shrink-0">
          <RoundIcon kind="save" />
        </button>
        <button
          aria-label="Help"
          className="size-5 shrink-0 rounded-full border-2 border-[#c6c6d8] bg-[#15151c] text-sm leading-4 font-bold text-[#e9e24a]"
        >
          ?
        </button>
      </div>
    </nav>
  );
}

function GroupLabel({ children }: { children: ReactNode }) {
  return (
    <div className="flex items-center gap-1 text-[8px] leading-[10px] font-bold text-white">
      <span className="h-px flex-1 bg-white" />
      {children}
      <span className="h-px flex-1 bg-white" />
    </div>
  );
}

type LampProps = { children: ReactNode; on?: boolean; size?: string };

function Lamp({ children, on = false, size = "h-4 w-[37px] text-[9px]" }: LampProps) {
  return (
    <span
      className={`flex items-center justify-center border border-[#d9e6f4] bg-black font-bold ${
        on ? "text-[#37d83c]" : "text-[#565656]"
      } ${size}`}
    >
      {children}
    </span>
  );
}

function Lcd({ value, unit }: { value: string; unit: string }) {
  return (
    <span className="flex h-[17px] w-[57px] overflow-hidden bg-black text-[#3be33f]">
      <span className="text-[7px] leading-[9px]">AUTO</span>
      <span className="ml-auto font-['Liberation_Mono',monospace] text-[16px] leading-[17px] italic">{value}</span>
      <span className="self-end text-[6px] leading-[9px]">{unit}</span>
    </span>
  );
}

function StatusBar() {
  return (
    <div className="flex h-[35px] shrink-0 border-b border-[#c9c9c9] bg-[#94bce6] font-['Liberation_Sans',Arial,sans-serif]">
      <div className="w-[260px] shrink-0 bg-[#efefef] pt-[5px] pl-[3px]">
        <div className="flex h-[21px] w-[199px] items-center gap-0.5 rounded-md border-2 border-[#244f98] bg-[#4173c3] text-[10px] font-bold text-white">
          <svg viewBox="0 0 16 16" className="size-4">
            <circle cx="8" cy="8" r="7.5" fill="#dce8ec" />
            <rect x="3" y="4" width="10" height="7" fill="#111" />
            <path d="M3 11l9-4 2 2-8 5z" fill="#f0e640" />
          </svg>
          Measure
        </div>
      </div>
      <dl className="my-px grid w-[123px] shrink-0 grid-cols-[32px_1fr] content-center rounded-l bg-black pl-[7px] text-[9px] leading-[14px] text-[#cfcfcf]">
        <dt>Time</dt>
        <dd>: &nbsp;0:00:16</dd>
        <dt>Data</dt>
        <dd>: &nbsp;33</dd>
      </dl>
      <div className="flex min-w-0 flex-1 pt-0.5 pl-[37px]">
        <div className="w-[30px]">
          <div className="h-2 border-x border-t border-white text-center text-[8px] leading-2 font-bold text-white">
            EL
          </div>
          <div className="mt-1 flex flex-wrap gap-x-[3px] pl-0.5 text-[8px] leading-[9px] font-bold text-black">
            <span className="rounded-sm bg-[#9cf08c] px-px text-[#134a10]">1</span>
            <span>2</span>
            <span>3</span>
            <span className="pr-3 pl-px">4</span>
          </div>
        </div>
        <div className="ml-[9px] w-[37px]">
          <GroupLabel>UMODE</GroupLabel>
          <Lamp on>RMS</Lamp>
        </div>
        <div className="ml-2 w-[37px]">
          <GroupLabel>IMODE</GroupLabel>
          <Lamp on>RMS</Lamp>
        </div>
        <div className="ml-2.5 w-[118px]">
          <div className="px-5">
            <GroupLabel>RANGE</GroupLabel>
          </div>
          <div className="flex gap-1">
            <Lcd value="150" unit="V" />
            <Lcd value="500" unit="mA" />
          </div>
        </div>
        <div className="ml-1.5 w-[66px]">
          <div className="px-1">
            <GroupLabel>FILTER</GroupLabel>
          </div>
          <div className="flex gap-0.5">
            <Lamp size="h-4 w-8 text-[9px]">LINE</Lamp>
            <Lamp size="h-4 w-8 text-[9px]" on>
              FREQ
            </Lamp>
          </div>
        </div>
        <div className="ml-1.5 grid grid-cols-[38px_38px] content-start gap-x-1.5 gap-y-px">
          <Lamp size="h-[15px] w-[38px] text-[9px]">Scaling</Lamp>
          <Lamp size="h-[15px] w-[38px] text-[8px]">MaxHold</Lamp>
          <Lamp size="h-[15px] w-[38px] text-[9px]">AVG</Lamp>
          <Lamp size="h-[15px] w-[38px] text-[9px]">NULL</Lamp>
        </div>
      </div>
    </div>
  );
}

function Separator() {
  return <span className="mx-1 h-[23px] w-px shrink-0 bg-[#b5b5b5]" />;
}

function MenuArrow({ label }: { label: string }) {
  return (
    <button aria-label={label} className="flex w-4 justify-center">
      <span className="border-x-[3px] border-t-4 border-x-transparent border-t-black" />
    </button>
  );
}

const views = [
  { name: "Numeric", icon: <ListIcon className="size-5" /> },
  { name: "NumericList", icon: <ListIcon className="size-5" letter="L" /> },
  { name: "NumericMatrix", icon: <ListIcon className="size-5" letter="M" /> },
  { name: "Wave", icon: <SineIcon /> },
  { name: "Trend", icon: <TrendIcon /> },
  { name: "Bar", icon: <BarIcon /> },
  { name: "Vector", icon: <VectorIcon /> },
];

function Toolbar() {
  return (
    <div className="flex h-[34px] shrink-0 items-center bg-[#efefef] pl-3 font-['Liberation_Sans',Arial,sans-serif] text-[9px] text-[#222]">
      <span className="w-7">View</span>
      <div className="flex gap-px">
        {views.map((v) => (
          <button
            key={v.name}
            aria-label={v.name}
            className="flex h-[25px] w-[26px] items-center justify-center rounded-xs border-2 border-[#9c9c9c] bg-[#dcdcdc]"
          >
            {v.icon}
          </button>
        ))}
      </div>
      <button aria-label="Cascade" className="ml-1.5">
        <CascadeIcon />
      </button>
      <button aria-label="Tile" className="ml-2">
        <TileIcon />
      </button>
      <Separator />
      <span className="ml-px w-[37px]">Measu...</span>
      <div className="flex gap-[5px]">
        <button aria-label="Start">
          <MeasureIcon kind="play" />
        </button>
        <button aria-label="Stop">
          <MeasureIcon kind="stop" />
        </button>
        <button aria-label="Repeat">
          <MeasureIcon kind="reset" />
        </button>
      </div>
      <Separator />
      <span className="ml-[5px] w-[30px]">Integ</span>
      <div className="flex gap-[5px]">
        <button aria-label="Integration start">
          <IntegIcon kind="play" />
        </button>
        <button aria-label="Integration stop">
          <IntegIcon kind="stop" />
        </button>
        <button aria-label="Integration reset">
          <IntegIcon kind="reset" />
        </button>
        <button aria-label="Integration setup">
          <IntegIcon kind="set" />
        </button>
      </div>
      <Separator />
      <button aria-label="Null">
        <NullIcon />
      </button>
      <MenuArrow label="Null menu" />
      <Separator />
      <button aria-label="Options">
        <GearsIcon />
      </button>
      <MenuArrow label="Options menu" />
      <button aria-label="Print">
        <PrintIcon />
      </button>
      <MenuArrow label="Print menu" />
      <Separator />
      <button aria-label="Setup">
        <SetupIcon />
      </button>
      <Separator />
      <button aria-label="Network">
        <NetworkIcon />
      </button>
    </div>
  );
}

export default function App() {
  return (
    <div className="relative flex h-screen flex-col overflow-hidden bg-[#0000c4] font-['DejaVu_Sans_Condensed','Noto_Sans',sans-serif]">
      <TitleBar />
      <div className="flex min-h-0 flex-1">
        <Sidebar />
        <main className="flex min-w-0 flex-1 flex-col">
          <StatusBar />
          <Toolbar />
          <div className="grid min-h-0 flex-1 grid-cols-[315fr_470fr_469fr] overflow-hidden bg-[#8b9bb0]">
            <div className="flex min-h-0 min-w-0 flex-col">
              <NumericListWindow />
            </div>
            <div className="flex min-h-0 min-w-0 flex-col">
              <NumericWindow />
              <MatrixWindow />
              <ChildWindow title="Bar" icon={<BarIcon className="size-3" />}>
                <div className="flex">
                  <div className="min-w-0 flex-1 pt-2.5">
                    <BarChart />
                  </div>
                  <div className="flex flex-col gap-1 pt-0.5 pl-[5px]">
                    <button aria-label="Page up">
                      <UpIcon />
                    </button>
                    <button aria-label="Colors">
                      <ColorIcon />
                    </button>
                  </div>
                </div>
              </ChildWindow>
            </div>
            <div className="flex min-h-0 min-w-0 flex-col">
              <ChildWindow title="Vector" icon={<VectorIcon className="size-3" />}>
                <div className="pt-2.5 pr-0.5 pb-0.5">
                  <VectorChart />
                </div>
              </ChildWindow>
              <ChildWindow title="Trend" icon={<TrendIcon className="size-3" />}>
                <div className="flex pt-2.5 pb-[5px]">
                  <div className="min-w-0 flex-1">
                    <TrendChart />
                  </div>
                  <button aria-label="Trend items" className="self-start pl-[5px]">
                    <FlagIcon />
                  </button>
                </div>
              </ChildWindow>
              <ChildWindow title="Wave" icon={<SineIcon className="size-3" />}>
                <div className="flex pt-2.5">
                  <div className="min-w-0 flex-1">
                    <WaveChart />
                  </div>
                  <button aria-label="Wave items" className="self-start pl-[5px]">
                    <FlagIcon />
                  </button>
                </div>
              </ChildWindow>
            </div>
          </div>
        </main>
      </div>
      <div className="pointer-events-none absolute inset-x-0 bottom-0 h-7 bg-linear-to-t from-black/20 to-transparent" />
    </div>
  );
}
